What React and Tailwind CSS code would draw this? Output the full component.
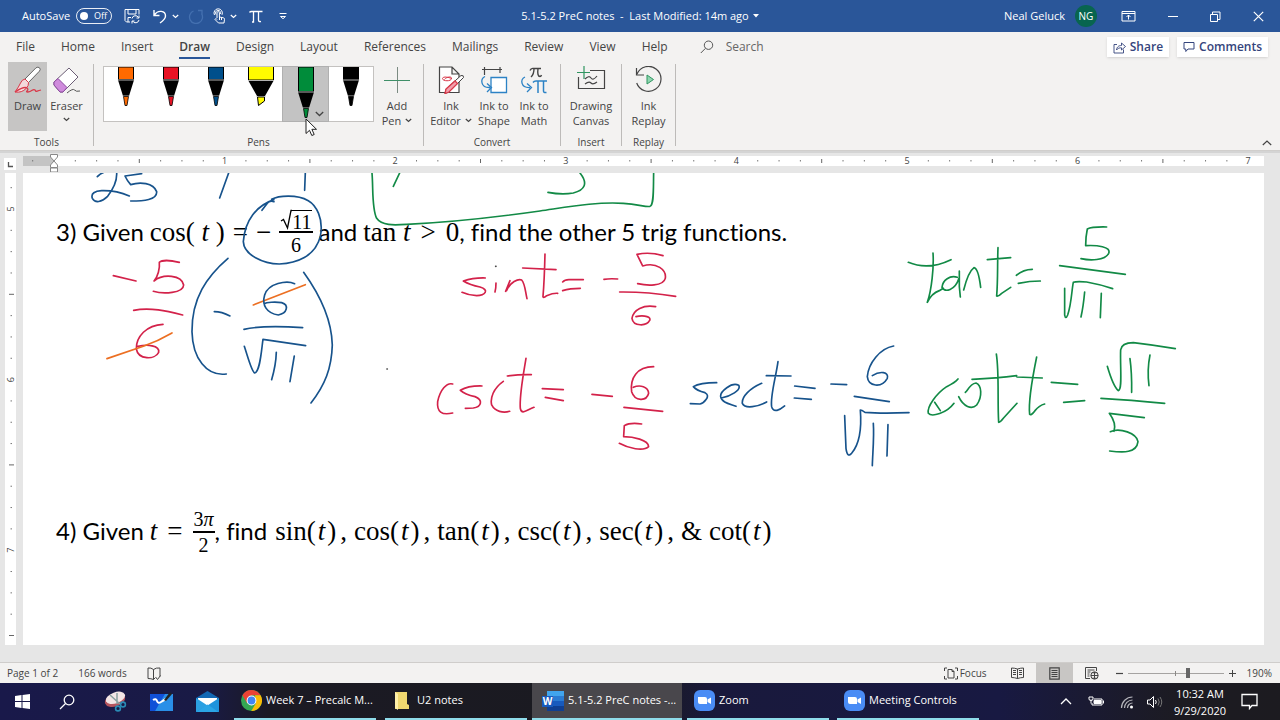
import { useState } from 'react'
import { clsx } from 'clsx'

const TABS = ['File', 'Home', 'Insert', 'Draw', 'Design', 'Layout', 'References', 'Mailings', 'Review', 'View', 'Help']

const PENS = [
    { name: 'Orange pen', color: '#ff6a00' },
    { name: 'Red pen', color: '#e81224' },
    { name: 'Blue pen', color: '#004f8b' },
    { name: 'Yellow highlighter', color: '#fffc00', wide: true },
    { name: 'Green pen', color: '#008c3a' },
    { name: 'Black pen', color: '#000000' },
]

const RED = '#d3224a'
const BLUE = '#17538c'
const GREEN = '#128a46'
const ORANGE = '#ec6f22'

// Ink strokes, three units to a pixel, grouped by where they sit on the page
const INK = [
    {
        at: 'translate(0 145) scale(0.3333)',
        strokes: [
            [BLUE, 'M292 95Q300 86 312 82M350 82C352 110 338 135 322 155C305 172 285 175 277 160C272 145 285 138 305 137C335 136 365 143 388 153'],
            [BLUE, 'M425 86L375 93Q382 108 392 119C420 110 460 113 470 140C472 165 430 168 392 168'],
            [BLUE, 'M686 84L659 159M916 84L914 136'],
            [BLUE, 'M822 170Q808 164 798 180L786 196M822 164C770 182 735 225 730 290C732 330 790 357 838 357C890 355 945 335 961 275C972 220 948 180 925 167C890 147 835 152 815 163'],
            [RED, 'M340 392L408 408M538 352C510 345 485 345 478 352C480 370 474 395 462 408C490 385 545 390 551 420C550 445 490 448 460 439'],
            [RED, 'M401 496C450 486 500 498 548 510M489 538C440 540 408 575 409 612C415 645 465 645 476 622C480 600 440 598 414 604'],
            [ORANGE, 'M321 641L430 604Q475 588 516 564M760 480L916 419'],
            [BLUE, 'M684 340C620 395 575 460 576 560C578 640 620 695 679 687M643 500Q665 500 690 513'],
            [BLUE, 'M884 416C860 405 805 415 794 450C785 480 800 505 835 510C862 505 868 480 845 473C825 470 800 472 792 476'],
            [BLUE, 'M732 553Q790 540 908 548M733 604C745 640 755 680 764 684C780 680 784 620 789 583L917 602M829 622Q828 660 815 704M883 633L870 710'],
            [BLUE, 'M911 382C960 450 995 520 997 600C995 670 975 720 933 774'],
            ['#444444', 'M1161 672l1 0'],
        ],
    },
    {
        at: 'translate(340 145) scale(0.3333)',
        strokes: [
            [GREEN, 'M96 84C100 130 95 190 110 220C125 242 160 241 200 238C330 232 480 215 600 198C690 185 770 170 850 175C895 178 920 187 930 184C942 180 940 140 941 84'],
            [GREEN, 'M179 84L160 124M720 84C745 115 735 135 700 144C670 149 645 146 624 142'],
            [RED, 'M436 399Q400 398 370 408Q390 420 420 426C450 435 435 452 410 452Q385 451 366 442M468 414Q468 430 465 441'],
            [RED, 'M497 439L510 407M500 436C510 412 535 400 545 405C555 415 556 440 561 461'],
            [RED, 'M615 327C614 370 612 420 609 455Q611 460 620 452Q640 444 653 445M548 369L648 374'],
            [RED, 'M668 411Q675 403 690 404L730 404M668 437Q690 430 721 430M792 403Q810 400 833 402'],
            [RED, 'M969 332Q930 320 891 328L908 363C950 350 980 375 976 400C970 425 920 422 893 416M839 441Q920 440 1007 454'],
            [RED, 'M947 485C910 478 880 495 876 520C880 545 920 545 930 525C932 510 900 512 888 515'],
            ['#444444', 'M467 364l1 0'],
            [RED, 'M338 717C320 712 300 735 293 770C290 800 305 812 338 804M426 723Q385 722 361 736Q375 748 405 755C430 765 425 785 400 789L376 790'],
            [RED, 'M490 709C460 730 450 760 455 780C465 800 490 805 509 799M558 640C550 690 538 750 541 790C545 812 560 795 582 787M502 693Q540 688 574 689'],
            [RED, 'M607 731L670 734M616 757L670 767M756 748L817 754'],
            [RED, 'M941 665C890 665 870 700 875 740C885 770 920 770 926 745C925 725 900 718 880 727M852 787L968 799'],
            [RED, 'M905 837Q870 832 853 842L851 875C880 875 925 885 926 905C910 920 865 910 838 895'],
        ],
    },
    {
        at: 'translate(680 200) scale(0.3333)',
        strokes: [
            [BLUE, 'M110 548Q60 548 40 560Q50 572 75 578C95 588 70 610 60 612L31 611'],
            [BLUE, 'M124 594C150 590 185 570 176 556C155 545 120 575 122 590C125 608 150 612 168 619M245 550C210 565 185 590 187 610C195 628 235 620 260 606'],
            [BLUE, 'M294 485C288 530 270 590 275 620C280 640 300 630 314 618M259 527L333 528M344 558L405 565M343 594L394 598M453 552Q475 553 500 554'],
            [BLUE, 'M641 438C600 445 565 490 562 530C565 560 605 565 622 535C628 515 600 512 577 527M523 589L628 605'],
            [BLUE, 'M494 647L498 745Q502 775 515 760C540 730 545 680 541 630Q545 630 555 637Q600 641 687 638M580 670C583 710 578 760 577 797M624 674L621 768'],
        ],
    },
    {
        at: 'translate(900 200) scale(0.3333)',
        strokes: [
            [GREEN, 'M99 159C102 200 95 270 82 307Q95 280 118 272L130 265M25 187Q85 212 153 179'],
            [GREEN, 'M172 232C150 225 128 240 126 262C135 278 165 272 177 235M178 213L178 260L181 291M191 270Q205 215 222 203Q235 205 242 262'],
            [GREEN, 'M294 143C292 190 294 240 290 288Q295 290 305 280L332 262M262 179L332 173M349 226Q370 208 397 208M355 250Q390 243 421 243'],
            [GREEN, 'M620 81Q575 80 562 87Q557 110 557 137C590 135 635 140 626 160C615 182 570 182 543 176M479 197L676 223'],
            [GREEN, 'M494 265L494 345Q497 360 503 345C515 310 515 270 520 247Q530 243 560 246Q600 253 638 266M554 276Q550 320 543 351M604 280L601 353'],
            [GREEN, 'M174 537Q165 548 140 560C110 580 80 620 85 640C95 652 140 640 162 610M104 607L121 632'],
            [GREEN, 'M176 590C190 620 215 630 230 615C248 590 245 555 228 549Q215 550 200 573L196 577'],
            [GREEN, 'M216 538Q290 535 350 527M351 531L427 534M289 462C298 520 292 600 296 667Q300 668 310 655L351 610'],
            [GREEN, 'M410 471C400 520 385 610 389 643Q393 648 405 632Q418 616 434 612M454 547L533 553M491 607L554 602'],
            [GREEN, 'M622 499Q640 560 655 572C668 570 660 500 662 450Q665 428 700 428Q760 435 826 446M690 476Q696 520 695 577M750 465Q741 510 747 557'],
            [GREEN, 'M603 595Q690 600 794 610M733 653L628 640Q650 670 642 694M631 695C660 682 710 700 714 725C710 760 670 758 629 753'],
        ],
    },
]

function Icon({ w = 16, h = 16, className, children }) {
    return (
        <svg width={w} height={h} viewBox={`0 0 ${w} ${h}`} fill="none" stroke="currentColor" strokeWidth="1" className={clsx('shrink-0', className)} aria-hidden="true">
            {children}
        </svg>
    )
}

function Chevron({ className }) {
    return (
        <Icon w={7} h={5} className={className}>
            <path d="M.8 1l2.700 2.500L6.200 1" strokeWidth="1.200" />
        </Icon>
    )
}

function TitleBar() {
    const [autoSave, setAutoSave] = useState(false)

    return (
        <header className="grid grid-cols-[1fr_auto_1fr] items-center h-8 bg-[#2a5699] text-white text-[11px]">
            <div className="flex items-center pl-[22px]">
                <span id="autosave">AutoSave</span>
                <button
                    role="switch"
                    aria-checked={autoSave}
                    aria-labelledby="autosave"
                    onClick={() => setAutoSave(!autoSave)}
                    className="flex items-center gap-1.5 w-9 h-4 ml-1.5 pl-[3px] border border-white/90 rounded-full text-[9px]"
                >
                    <span className="w-2 h-2 rounded-full bg-white" />
                    {autoSave ? 'On' : 'Off'}
                </button>
                <button aria-label="Save" className="ml-3">
                    <Icon w={17}>
                        <path d="M6 14H2.500L1 12.500V1.500h14v5M4 1.500v4.500h8V1.500M4 14V9.500h3" />
                        <path d="M8 10.500a3.500 3.500 0 0 1 6.500-1M15 7.500v2.500h-2.500M15 12a3.500 3.500 0 0 1-6.500 1M8 15.500V13h2.500" />
                    </Icon>
                </button>
                <button aria-label="Undo" className="ml-3">
                    <Icon w={15}>
                        <path d="M1 2v5.500h5.500M1.300 7C5 1.500 12.500 2.500 12.500 8c0 2.500-2 4.500-5.500 7" strokeWidth="1.400" />
                    </Icon>
                </button>
                <button aria-label="Undo options" className="ml-1"><Chevron /></button>
                <button aria-label="Redo" disabled className="ml-2 text-[#4470b0]">
                    <Icon w={17}>
                        <path d="M11 2.500h4v4M14.500 5.500a6.500 6.500 0 1 1-8-2.500" strokeWidth="1.300" />
                    </Icon>
                </button>
                <button aria-label="Touch mode" className="ml-2">
                    <Icon w={14}>
                        <path d="M5 10V4.800a1.200 1.200 0 0 1 2.400 0V9l4 .8c.8.200 1.200.7 1.100 1.500L12 15H6.500L3 11.500c.4-1.200 1.300-1.200 2 0M2.500 7A4.200 4.200 0 1 1 10 6.800M4 6.500a2.600 2.600 0 1 1 4.500-.5M9.500 9.500V12M7.500 9v3" />
                    </Icon>
                </button>
                <button aria-label="Touch mode options" className="ml-1"><Chevron /></button>
                <button aria-label="Insert equation" className="ml-3">
                    <Icon w={14}>
                        <path d="M.5 4.500Q1 3.500 2.500 3.500h11M4.500 3.500V14h-1.500M9.500 3.500V12q0 2 2.500 1.500" strokeWidth="1.300" />
                    </Icon>
                </button>
                <button aria-label="Customize toolbar" className="ml-4">
                    <Icon w={8} h={8}><path d="M.5 1.500h7M1.500 4.500l2.500 2.200L6.500 4.500z" /></Icon>
                </button>
            </div>
            <div className="flex items-center">
                <h1>5.1-5.2 PreC notes&nbsp; -&nbsp; Last Modified: 14m ago</h1>
                <svg width="6" height="4" className="ml-1" aria-hidden="true"><path d="M0 0h6L3 3.500z" fill="#fff" /></svg>
            </div>
            <div className="flex items-center justify-end pr-4">
                <span>Neal Geluck</span>
                <span className="flex items-center justify-center w-[22px] h-[22px] ml-2.5 rounded-full bg-[#08654f] text-[10px]">NG</span>
                <button aria-label="Ribbon display options" className="ml-6">
                    <Icon w={15} h={12}><path d="M1 1.500h13v9.500H1zM1 3.500h13M7.500 9.500V5M5.500 7l2-2 2 2" /></Icon>
                </button>
                <button aria-label="Minimize" className="ml-8">
                    <Icon w={10} h={10}><path d="M0 5.500h10" /></Icon>
                </button>
                <button aria-label="Restore" className="ml-8">
                    <Icon w={11} h={11}><path d="M.5 3.500h7v7h-7zM2.500 3.500v-2.500h7.500v7.500H7.500" /></Icon>
                </button>
                <button aria-label="Close" className="ml-8">
                    <Icon w={11} h={11}><path d="M.8.8l9.400 9.400M10.200.8L.8 10.200" strokeWidth="1.200" /></Icon>
                </button>
            </div>
        </header>
    )
}

function TabBar({ active, onSelect }) {
    return (
        <nav className="flex items-center h-7 pt-0.5 pl-4 pr-3 text-xs text-[#444444]">
            <div className="flex gap-[26px]">
                {TABS.map((tab) => (
                    <button
                        key={tab}
                        onClick={() => onSelect(tab)}
                        className={clsx(
                            'h-6 pt-0.5 border-b-2 leading-5',
                            tab === active ? 'border-[#2a5699] font-semibold' : 'border-transparent',
                        )}
                    >
                        {tab}
                    </button>
                ))}
            </div>
            <label className="flex items-center gap-3 ml-8 text-[#555555]">
                <Icon w={14} h={14}>
                    <circle cx="8.500" cy="5.200" r="4.200" />
                    <path d="M5.500 8.300L.8 13" />
                </Icon>
                <input type="text" aria-label="Search" placeholder="Search" className="w-24 bg-transparent outline-none placeholder:text-[#666666]" />
            </label>
            <div className="flex gap-2 ml-auto font-semibold text-[#34447c]">
                <button className="flex items-center gap-1 h-5 px-1.5 bg-white shadow-sm">
                    <Icon w={13} h={13}>
                        <path d="M4 3.500H1v8.500h9.500V8.500M3.500 9C4 5.500 6 4.500 8.500 4.500V2l4 3.500-4 3.500V6.800C6.500 6.800 5 7 3.500 9z" strokeWidth=".9" />
                    </Icon>
                    Share
                </button>
                <button className="flex items-center gap-1 h-5 px-1.5 bg-white shadow-sm">
                    <Icon w={12} h={12}><path d="M1 1.500h10v6.500H5L2.800 10.500V8H1z" /></Icon>
                    Comments
                </button>
            </div>
        </nav>
    )
}

function RibbonGroup({ label, className, children }) {
    return (
        <section aria-label={label} className="relative flex flex-col justify-between h-[88px] pr-px">
            <div className={clsx('flex', className)}>{children}</div>
            <span className="text-center text-[10px] leading-4">{label}</span>
            <span className="absolute right-0 top-0.5 bottom-1 w-px bg-[#bdbbb9]" />
        </section>
    )
}

function RibbonButton({ lines, menu, className, children }) {
    return (
        <button className={clsx('flex flex-col items-center h-[69px] pt-1 text-[11px] leading-[15px]', className)}>
            <span className="flex items-center justify-center h-7 mb-1">{children}</span>
            <span>{lines[0]}</span>
            <span className="flex items-center gap-1">
                {lines[1]}
                {menu && <Chevron className={lines[1] ? '' : 'mt-1'} />}
            </span>
        </button>
    )
}

function Pen({ pen, raised }) {
    const tip = raised ? 36 : 24
    return (
        <svg width="28" height="54" viewBox="0 0 28 54" aria-hidden="true">
            {pen.wide ? (
                <>
                    <path d="M1 0h26v13l-9 16h-8L1 13z" fill="#000" />
                    <path d="M2 0h24v12.500H2z" fill={pen.color} />
                    <path d="M1 13.500h26M9 29.500h10" stroke="#ddd" strokeWidth=".8" />
                    <path d="M10.500 30h7v4l-6 4.500z" fill={pen.color} stroke="#000" />
                </>
            ) : (
                <>
                    <path d={`M6 0h16v${tip - 11}l-5 16h-6L6 ${tip - 11}z`} fill="#000" />
                    <path d={`M6.500 0h15v${tip - 11.500}h-15z`} fill={pen.color} stroke="#000" />
                    <path d={`M5.500 ${tip - 11}h17M10.500 ${tip + 5}h7`} stroke="#ddd" strokeWidth=".8" />
                    <path d={`M11.500 ${tip + 5.500}h5l-1.500 9h-2z`} fill={pen.color} stroke="#000" strokeWidth=".8" />
                </>
            )}
        </svg>
    )
}

function Ribbon() {
    const [pen, setPen] = useState(4)

    return (
        <div className="relative flex h-[91px] pt-0.5 text-[#444444] border-b border-[#d0cecc]">
            <RibbonGroup label="Tools" className="pl-2 pr-[7px]">
                <RibbonButton lines={['Draw']} className="w-[39px] bg-[#c6c5c4]">
                    <Icon w={30} h={28}>
                        <path d="M12 13L23 1.800q2-1.300 3.500 0t0 3.300L15.500 16.500z" fill="#fff" stroke="#666" />
                        <path d="M12 13q-3 .5-4.500 4T2 26q7 1 11-3.500 3-3 2.500-6z" fill="#f3d9dc" stroke="#d9394a" />
                        <path d="M2 26q9-6 12-4c3 2-3 4 1 4s5-4 7-2-1 2 6 0" stroke="#d9394a" strokeWidth="1.300" />
                    </Icon>
                </RibbonButton>
                <RibbonButton lines={['Eraser']} menu className="w-[39px]">
                    <Icon w={28} h={28}>
                        <path d="M1 16L16 2l9 9-15 15H7L1 19z" fill="#fff" stroke="#6b5d75" />
                        <path d="M1 16l4-3.500 9 9L10 26H7L1 19z" fill="#cf8bdc" stroke="#8d4ba0" />
                        <path d="M14 27q6-5 7.500-3t5.500 1" stroke="#555" />
                    </Icon>
                </RibbonButton>
            </RibbonGroup>
            <RibbonGroup label="Pens" className="pl-[9px] pr-[7px] gap-1">
                <div role="radiogroup" aria-label="Pens" className="flex w-[271px] h-14 mt-1 bg-white border border-[#c4c2c0]">
                    {PENS.map((p, i) => (
                        <div key={p.name} className={clsx('relative w-[45px] flex justify-center', i === pen && 'bg-[#c3c3c3] outline outline-[#b0b0b0]')}>
                            <button role="radio" aria-checked={i === pen} aria-label={p.name} onClick={() => setPen(i)} className="flex">
                                <Pen pen={p} raised={i === pen} />
                            </button>
                            {i === pen && (
                                <>
                                    <Icon w={9} h={6} className="absolute right-1 bottom-1">
                                        <path d="M.8 1l3.700 3.500L8.200 1" strokeWidth="1.300" />
                                    </Icon>
                                    <svg width="13" height="19" viewBox="0 0 13 19" className="absolute left-[22px] top-[51px] z-10" aria-hidden="true">
                                        <path d="M1 1v14.500l3.500-3.200 2.300 5.200 2.400-1-2.300-5.200h4.600z" fill="#fff" stroke="#222" />
                                    </svg>
                                </>
                            )}
                        </div>
                    ))}
                </div>
                <RibbonButton lines={['Add', 'Pen']} menu className="w-[38px]">
                    <Icon w={26} h={26}>
                        <path d="M13.500 0v26" stroke="#7b8b82" />
                        <path d="M0 13.500h26" stroke="#3f8f68" />
                    </Icon>
                </RibbonButton>
            </RibbonGroup>
            <RibbonGroup label="Convert" className="pl-1 pr-1.5">
                <RibbonButton lines={['Ink', 'Editor']} menu className="w-[46px]">
                    <Icon w={28} h={28}>
                        <path d="M2.500 1H15l7 7v18.500H2.500zM15 1v7h7" fill="#fff" stroke="#444" strokeWidth="1.200" />
                        <path d="M15 12.500q-9-3-9.500 0c0 3 9 3 9 0s-6-1-7 1" stroke="#d9394a" />
                        <path d="M9 23L24 9.500q3-.5 2.500 2L12 26l-4 1.500z" fill="#fff" stroke="#444" />
                        <path d="M9 23l9-8 2.500 2.500L12 26l-4 1.500z" fill="#f2a0ad" stroke="#d9394a" strokeWidth="1.300" />
                    </Icon>
                </RibbonButton>
                <RibbonButton lines={['Ink to', 'Shape']} className="w-10">
                    <Icon w={28} h={28}>
                        <path d="M2 3.500h20M4.500 1v8M20 1v6" stroke="#444" strokeWidth="1.200" />
                        <path d="M11 11.500h15.500v15H11z" fill="#fff" stroke="#2c82c5" strokeWidth="1.300" />
                        <path d="M5 10.500C0 13 .5 22 10 21.500M7 17.500l4.500 4L7 26" stroke="#2c82c5" strokeWidth="1.300" />
                    </Icon>
                </RibbonButton>
                <RibbonButton lines={['Ink to', 'Math']} className="w-10">
                    <Icon w={28} h={28}>
                        <path d="M10 4.500Q11 2 13.500 2.500H21M14 2.500q0 6-3 8.500M18 2.500q-1 8 2 8 1 0 1.500-1.500" stroke="#444" strokeWidth="1.400" />
                        <path d="M5 11C0 13.500.5 22 10 21.500M7 17.500l4.500 4L7 26" stroke="#2c82c5" strokeWidth="1.300" />
                        <path d="M13 16.500q1-1.500 3-1.500h11M18 15v12M23.500 15v10q0 2 3 1.500" stroke="#2c82c5" strokeWidth="1.500" />
                    </Icon>
                </RibbonButton>
            </RibbonGroup>
            <RibbonGroup label="Insert" className="px-1">
                <RibbonButton lines={['Drawing', 'Canvas']} className="w-[52px]">
                    <Icon w={30} h={28}>
                        <path d="M2.500 11v11.500h26v-18H14" stroke="#444" strokeWidth="1.200" />
                        <path d="M8 0v13M1 6.500h13" stroke="#2f9560" strokeWidth="1.200" />
                        <path d="M9 13q4-4 6-1t6-2M9 18q4-3 6-1t6-1" stroke="#444" strokeWidth="1.200" />
                    </Icon>
                </RibbonButton>
            </RibbonGroup>
            <RibbonGroup label="Replay" className="px-1">
                <RibbonButton lines={['Ink', 'Replay']} className="w-[45px]">
                    <Icon w={28} h={28}>
                        <path d="M2 8A12.500 12.500 0 1 1 1.700 17M1.500 2v7H9" stroke="#444" strokeWidth="1.200" />
                        <path d="M12 9l6.500 4.500L12 18z" fill="#8fd6b0" stroke="#2f9560" />
                    </Icon>
                </RibbonButton>
            </RibbonGroup>
            <button aria-label="Collapse the ribbon" className="absolute right-2 bottom-1">
                <Icon w={10} h={6}><path d="M.8 5l4.200-4 4.200 4" strokeWidth="1.200" /></Icon>
            </button>
        </div>
    )
}

const INCH = 170.6

function HorizontalRuler() {
    const marks = []
    for (let i = -1; i <= 56; i++) {
        const x = 31 + (i * INCH) / 8
        if (i === 0) continue
        if (i % 8 === 0) marks.push(<text key={i} x={x} y="10" textAnchor="middle" fontSize="9" fill="#444">{i / 8}</text>)
        else if (i % 4 === 0) marks.push(<path key={i} d={`M${x} 5v4`} stroke="#666" />)
        else marks.push(<path key={i} d={`M${x} 6v1.500`} stroke="#777" />)
    }
    return (
        <div className="flex h-[22px] pt-[5px] bg-[#e6e6e6] border-t-2 border-[#d4d4d4]">
            <button aria-label="Tab stop" className="w-3 h-3 ml-1 mr-[7px] bg-white shrink-0 text-[#555555]">
                <Icon w={12} h={12}><path d="M4.500 4v4.500H9" strokeWidth="1.300" /></Icon>
            </button>
            <svg height="18" className="flex-1 mr-4 -mt-1" aria-hidden="true">
                <rect y="2" width="100%" height="10" fill="#fff" />
                <rect y="2" width="31" height="10" fill="#c4c4c4" />
                {marks}
                <path d="M27.500 .5h7v2.500l-3.500 4-3.500-4zM27.500 13.500V11l3.500-4 3.500 4v2.500zM27.500 14h7v4h-7z" fill="#fff" stroke="#888" />
            </svg>
        </div>
    )
}

function VerticalRuler() {
    const marks = []
    for (let i = -1; i <= 20; i++) {
        const y = 36 + (i * INCH) / 8
        if (i % 8 === 0) marks.push(<text key={i} transform={`translate(9 ${y}) rotate(-90)`} textAnchor="middle" fontSize="9" fill="#444">{5 + i / 8}</text>)
        else if (i % 4 === 0) marks.push(<path key={i} d={`M4 ${y}h5`} stroke="#666" />)
        else marks.push(<path key={i} d={`M5.500 ${y}h1.500`} stroke="#777" />)
    }
    return <svg width="11" className="ml-[5px] mr-[7px] bg-white shrink-0 self-stretch" aria-hidden="true">{marks}</svg>
}

function MathText({ className, children }) {
    return (
        <span className={clsx("flex items-center pt-0.5 font-['Liberation_Serif',serif] text-[27px]", className)}>
            {children}
        </span>
    )
}

function Fraction({ top, bottom }) {
    return (
        <span className="inline-flex flex-col items-center ml-2 text-[20px] leading-[22px]">
            <span className="px-px">{top}</span>
            <span className="self-stretch h-0.5 my-px bg-black" />
            <span>{bottom}</span>
        </span>
    )
}

function Root({ children }) {
    return (
        <span className="flex">
            <svg width="12" height="21" viewBox="0 0 12 21" aria-hidden="true">
                <path d="M1 12l2.500-1.500L7.500 19l3.500-17.500H12" fill="none" stroke="#000" strokeWidth="1.300" />
            </svg>
            <span className="h-5 mt-px border-t border-black">{children}</span>
        </span>
    )
}

function Call({ fn }) {
    return <span>{fn}(<i className="mx-0.5">t</i>)</span>
}

function Page() {
    return (
        <main className="relative flex-1 mr-4 pl-[33px] bg-white overflow-hidden font-[Lato,sans-serif] text-2xl text-black [font-variant-ligatures:none]">
            <p className="flex items-center h-[61px] mt-7 whitespace-pre">
                <span className="mr-1.5">3) Given</span>
                <MathText className="mr-1.5">
                    <span className="mr-2">cos( <i>t</i>{' '})</span>
                    <span className="mr-2">=</span>
                    <span>−</span>
                    <Fraction top={<Root>11</Root>} bottom="6" />
                </MathText>
                <span className="mr-1.5">and</span>
                <MathText className="gap-2.5">
                    <span>tan <i>t</i></span>
                    <span>{'>'}</span>
                    <span>0</span>
                </MathText>
                <span>, find the other 5 trig functions.</span>
            </p>
            <p className="flex items-center h-[61px] mt-[238px] whitespace-pre">
                <span className="mr-1.5">4) Given</span>
                <MathText>
                    <i className="mr-2.5">t</i>
                    <span className="mr-0.5">=</span>
                    <Fraction top={<>3<i>π</i></>} bottom="2" />
                </MathText>
                <span className="mr-2">, find</span>
                <MathText className="gap-[7px]">
                    {['sin', 'cos', 'tan', 'csc', 'sec'].map((fn) => (
                        <span key={fn} className="flex gap-1"><Call fn={fn} />,</span>
                    ))}
                    <span>&amp;</span>
                    <Call fn="cot" />
                </MathText>
            </p>
            <svg width="1241" height="472" viewBox="23 173 1241 472" fill="none" strokeLinecap="round" strokeLinejoin="round" className="absolute left-0 top-0" aria-label="Handwritten ink">
                {INK.map((group) => (
                    <g key={group.at} transform={group.at} strokeWidth="5">
                        {group.strokes.map(([color, d]) => <path key={d} d={d} stroke={color} />)}
                    </g>
                ))}
            </svg>
        </main>
    )
}

function StatusBar() {
    const [zoom, setZoom] = useState(63)

    return (
        <footer className="flex items-center h-[21px] pl-[7px] pr-2 bg-[#f3f2f1] border-t border-[#cfcdcb] text-[10px] text-[#444444]">
            <button>Page 1 of 2</button>
            <button className="ml-5">166 words</button>
            <button aria-label="Proofing" className="ml-5">
                <Icon w={14} h={13}><path d="M6.500 2.500Q4 .5 1 1v10.500q3 0 5.500 1V2.500Q9 .5 13 1v8.500M6.500 12.500L8 11M8.500 10l2 2.500 3-4" /></Icon>
            </button>
            <button className="flex items-center gap-0.5 ml-auto">
                <Icon w={14} h={13}><path d="M3 1H.5v3M.5 9v3H3M11 1h2.500v3M13.500 9v3H11M4 2.500h4l2 2V11H4zM8 2.500v2h2" /></Icon>
                Focus
            </button>
            <button aria-label="Read mode" className="ml-6">
                <Icon w={13} h={12}><path d="M.5 1q3 0 6 1v9.500q-3-1-6-1zM12.500 1q-3 0-6 1v9.500q3-1 6-1zM2 3.500h3M2 5.500h3M2 7.500h3M8 3.500h3M8 5.500h3M8 7.500h3" /></Icon>
            </button>
            <button aria-label="Print layout" className="flex items-center justify-center w-[37px] h-5 ml-3 bg-[#c8c6c4]">
                <Icon w={11} h={13}><path d="M.8.800h9.400v11.400H.8zM2.500 3.500h6M2.500 5.500h6M2.500 7.500h6M2.500 9.500h6" strokeWidth="1.200" /></Icon>
            </button>
            <button aria-label="Web layout" className="ml-3">
                <Icon w={14} h={13}><path d="M5 11.500H.5v-11h11V4M2.500 3h7M2.500 5h3M2.500 7h2M2.500 9h2" /><circle cx="9.500" cy="8.500" r="3.700" /><path d="M6 8.500h7M9.500 5v7M7.500 6q2-1 4 0M7.500 11q2 1 4 0" /></Icon>
            </button>
            <button aria-label="Zoom out" className="ml-4"><Icon w={9} h={9}><path d="M1 4.500h7" strokeWidth="1.200" /></Icon></button>
            <input
                type="range"
                aria-label="Zoom"
                value={zoom}
                onChange={(e) => setZoom(Number(e.target.value))}
                className="appearance-none w-24 h-3 mx-1 bg-[linear-gradient(#8a8886,#8a8886),linear-gradient(#a5a3a1,#a5a3a1)] bg-[length:1px_5px,100%_1px] bg-center bg-no-repeat [&::-webkit-slider-thumb]:appearance-none [&::-webkit-slider-thumb]:w-1 [&::-webkit-slider-thumb]:h-2.5 [&::-webkit-slider-thumb]:bg-[#666666]"
            />
            <button aria-label="Zoom in"><Icon w={9} h={9}><path d="M1 4.500h7M4.500 1v7" /></Icon></button>
            <button className="ml-2.5 text-right">190%</button>
        </footer>
    )
}

function ZoomLogo() {
    return (
        <svg width="21" height="21" viewBox="0 0 21 21" aria-hidden="true">
            <rect width="21" height="21" rx="6" fill="#4a8cf5" />
            <path d="M4 7h7q2 0 2 2v5H6q-2 0-2-2zM13.500 9.500L17 7.500v6.500l-3.500-2z" fill="#fff" />
        </svg>
    )
}

function Task({ icon, label, active }) {
    return (
        <button
            className={clsx(
                'flex items-center h-full border-b-2 border-[#8fdcea] text-left whitespace-nowrap text-[11px]',
                active ? 'w-[150px] pl-[10px] bg-[#49474c]' : 'w-[142px] pl-1.5',
            )}
        >
            <span className="flex justify-center w-[22px] mr-1 shrink-0">{icon}</span>
            {label}
        </button>
    )
}

function Taskbar() {
    return (
        <nav aria-label="Taskbar" className="flex items-center h-[37px] text-white bg-[linear-gradient(90deg,#19194a_0%,#191a45_16%,#1b1a24_21%,#1a1a20_50%,#19193c_56%,#181942_78%,#1c1b22_92%,#1c1b20_100%)]">
            <div className="flex items-center gap-[29px] pl-[15px]">
                <button aria-label="Start">
                    <svg width="15" height="15" viewBox="0 0 15 15"><path d="M0 2l6.500-1v6H0zM7.500 1L15 0v7H7.500zM0 8h6.500v6L0 13zM7.500 8H15v7l-7.500-1z" fill="#fff" /></svg>
                </button>
                <button aria-label="Search Windows">
                    <Icon><circle cx="10" cy="6" r="4.800" strokeWidth="1.300" /><path d="M6.500 9.500L1 15" strokeWidth="1.300" /></Icon>
                </button>
            </div>
            <div className="flex items-center gap-[23px] pl-[29px]">
                <button aria-label="Snip">
                    <svg width="23" height="21" viewBox="0 0 23 21">
                        <ellipse cx="11" cy="9" rx="10.500" ry="6.500" fill="#b4545e" transform="rotate(-20 11 9)" />
                        <ellipse cx="11.500" cy="7" rx="10" ry="5.500" fill="#f3e6e6" transform="rotate(-20 11 7)" />
                        <path d="M6 4l10 9M13 2v11" stroke="#8aa0a0" strokeWidth="1.500" />
                        <g fill="none" stroke="#2a8bb5" strokeWidth="1.600"><circle cx="14" cy="17.500" r="2.400" /><circle cx="19" cy="13.500" r="2.400" /></g>
                    </svg>
                </button>
                <button aria-label="Whiteboard">
                    <svg width="23" height="19" viewBox="0 0 23 19">
                        <path d="M0 2h23v17H0z" fill="#1266dd" />
                        <path d="M12 2h11v17H5z" fill="#2a8fe8" />
                        <path d="M0 2h15L5 19H0z" fill="#1050d8" />
                        <path d="M3 8q3-2 4 1t4 1 5-3" stroke="#fff" strokeWidth="2" fill="none" />
                        <path d="M14 8l6-8 2 2-6 7z" fill="#222" />
                    </svg>
                </button>
                <button aria-label="Mail">
                    <svg width="23" height="21" viewBox="0 0 23 21">
                        <path d="M0 7L11.500 0 23 7v14H0z" fill="#1268b4" />
                        <path d="M2 7h19v8H2z" fill="#fff" />
                        <path d="M0 7l11.500 7.500L0 21z" fill="#2ba0e2" />
                        <path d="M23 7l-11.500 7.500L23 21z" fill="#1f93dc" />
                        <path d="M0 21l11.500-7.500L23 21z" fill="#2ba5e6" />
                    </svg>
                </button>
            </div>
            <div className="flex h-full gap-[9px] pl-[15px]">
                <Task
                    label="Week 7 – Precalc M..."
                    icon={
                        <svg width="21" height="21" viewBox="0 0 21 21" aria-hidden="true">
                            <circle cx="10.500" cy="10.500" r="10.500" fill="#34a853" />
                            <path d="M1.400 5.300A10.500 10.500 0 0 1 19.600 5.300H10.500L6 13z" fill="#ea4335" />
                            <path d="M19.600 5.300A10.500 10.500 0 0 1 10.300 21L15 13 14 5.300z" fill="#fbbc05" />
                            <circle cx="10.500" cy="10.500" r="4.900" fill="#fff" />
                            <circle cx="10.500" cy="10.500" r="3.900" fill="#4285f4" />
                        </svg>
                    }
                />
                <Task
                    label="U2 notes"
                    icon={
                        <svg width="14" height="19" viewBox="0 0 14 19" aria-hidden="true">
                            <path d="M0 1h12v12l2 1v4H0z" fill="#f0d870" />
                            <path d="M0 1l3 2v16l-3-2z" fill="#fff0a8" />
                        </svg>
                    }
                />
            </div>
            <div className="flex h-full pl-[5px]">
                <Task
                    active
                    label="5.1-5.2 PreC notes -..."
                    icon={
                        <svg width="22" height="20" viewBox="0 0 22 20" aria-hidden="true">
                            <path d="M5 0h17v5H5z" fill="#41a5ee" />
                            <path d="M5 5h17v5H5z" fill="#2b7cd3" />
                            <path d="M5 10h17v5H5z" fill="#185abd" />
                            <path d="M5 15h17v5H5z" fill="#103f91" />
                            <path d="M0 5h11v11H0z" fill="#185abd" />
                            <text x="5.500" y="14" textAnchor="middle" fontSize="10" fontWeight="bold" fill="#fff">W</text>
                        </svg>
                    }
                />
            </div>
            <div className="flex h-full gap-2 pl-[5px]">
                <Task label="Zoom" icon={<ZoomLogo />} />
                <Task label="Meeting Controls" icon={<ZoomLogo />} />
            </div>
            <div className="flex items-center ml-auto pr-[22px]">
                <button aria-label="Hidden icons"><Icon w={12} h={7}><path d="M1 6l5-5 5 5" strokeWidth="1.300" /></Icon></button>
                <button aria-label="Battery" className="ml-4">
                    <Icon><path d="M3 9.500v-4M1 3v2q0 1.500 2 1.500T5 5V3z" /><path d="M6 5h8v6H4V9M15.500 6.500v3" /><path d="M6 6.500h7v3H6z" fill="currentColor" /></Icon>
                </button>
                <button aria-label="Network" className="ml-4 text-[#b5b5bb]">
                    <Icon w={14} h={14}><path d="M1.500 13A11 11 0 0 1 12.500 2M4.500 13A8 8 0 0 1 12.500 5M7.500 13A5 5 0 0 1 12.500 8" strokeWidth="1.200" /><circle cx="11.500" cy="12" r="1.500" fill="#fff" stroke="none" /></Icon>
                </button>
                <button aria-label="Volume" className="ml-3">
                    <Icon w={17} h={14}><path d="M1.500 5h2.500l3.500-3.500v11L4 9H1.500zM9.500 5q1.500 2 0 4" /><path d="M12 3.500q2.500 3.500 0 7M14 2q3.500 5 0 10" stroke="#777" /></Icon>
                </button>
                <time dateTime="2020-09-29T10:32" className="w-[74px] text-center text-[11px] leading-[17px]">
                    10:32 AM<br />9/29/2020
                </time>
                <button aria-label="Notifications" className="ml-1">
                    <Icon w={17} h={17}><path d="M1 1.500h15v11h-5L8.500 15.500V12.500H1z" strokeWidth="1.300" /></Icon>
                </button>
            </div>
        </nav>
    )
}

export default function App() {
    const [tab, setTab] = useState('Draw')

    return (
        <div className="flex flex-col h-screen overflow-hidden bg-[#f3f2f1] font-['Open_Sans','Noto_Sans',sans-serif]">
            <TitleBar />
            <TabBar active={tab} onSelect={setTab} />
            <Ribbon />
            <HorizontalRuler />
            <div className="flex flex-1 min-h-0 pb-[17px] bg-[#e6e6e6]">
                <VerticalRuler />
                <Page />
            </div>
            <StatusBar />
            <Taskbar />
        </div>
    )
}
